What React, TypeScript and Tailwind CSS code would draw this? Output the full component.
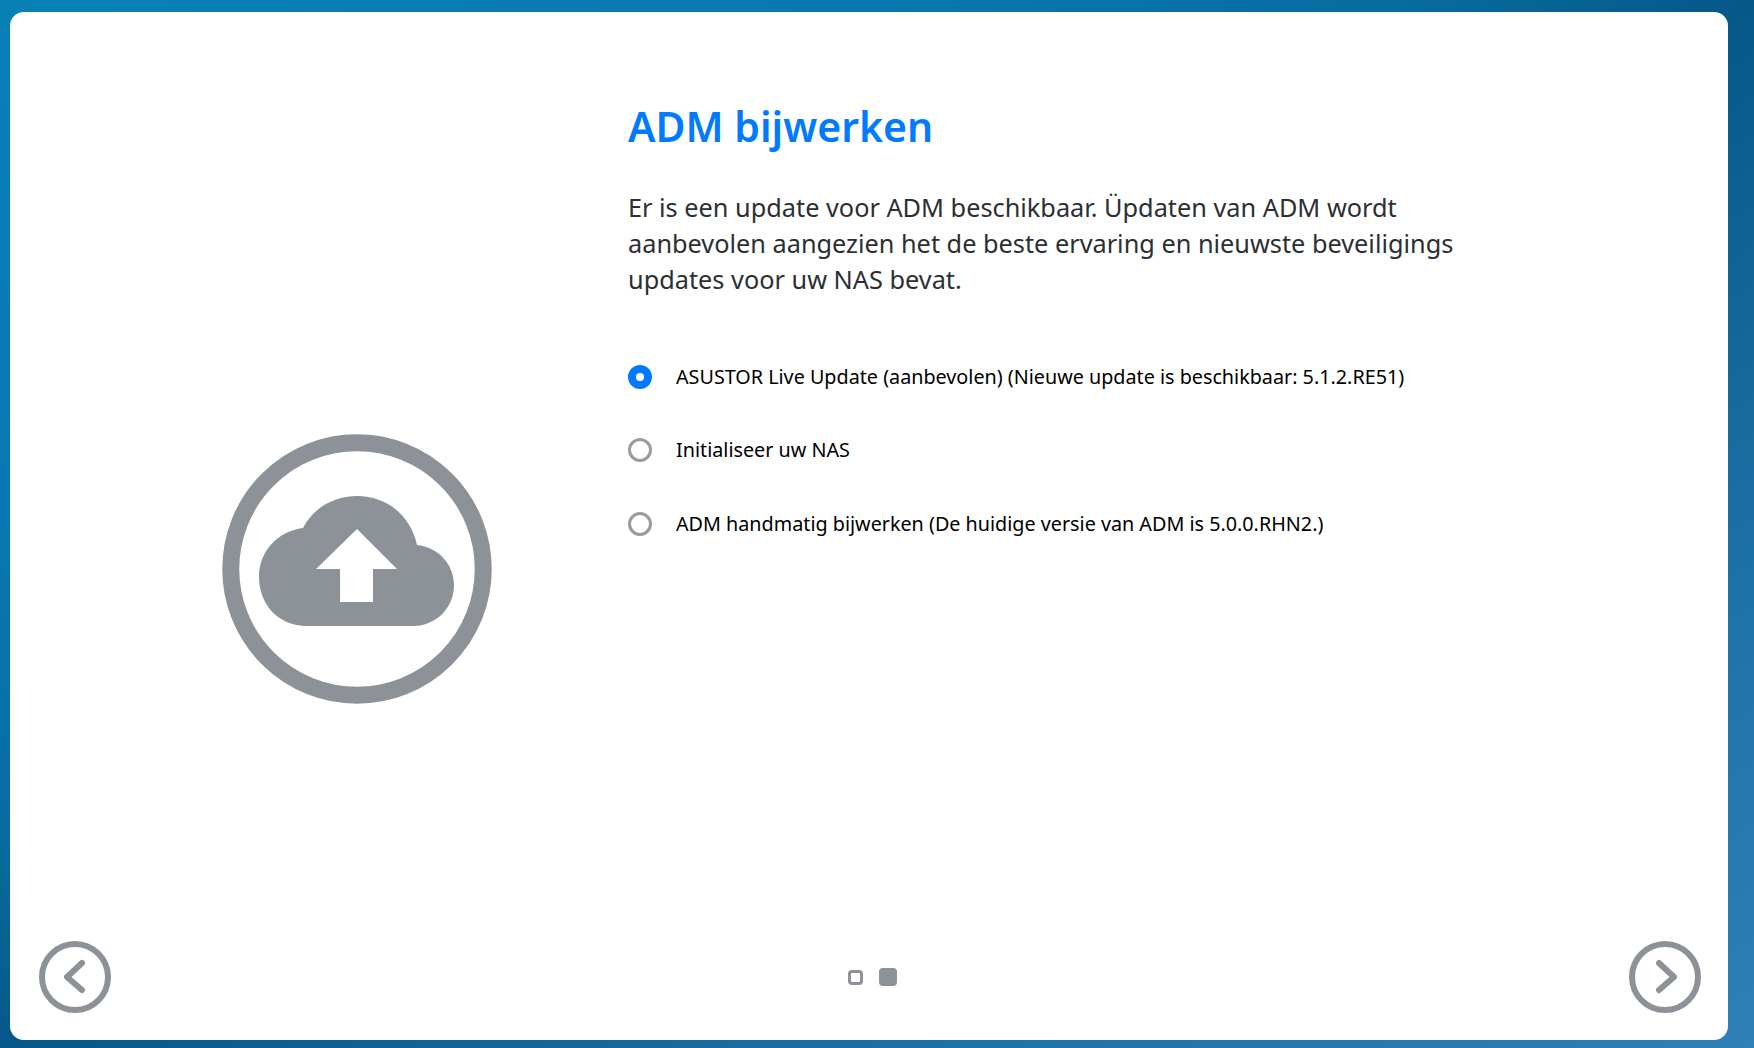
const GRAY = "#8c9297";

function UpdateIcon() {
  return (
    <svg width="270" height="270" viewBox="0 0 270 270">
      <circle cx="135" cy="135" r="126.25" fill="none" stroke={GRAY} strokeWidth="17" />
      <path
        d="M85 192C56 192 37 170 37 143C37 117 56 97 81 94C91 74 112 62 135 62C165 62 189 82 195 111C216 113 232 130 232 151C232 174 214 192 191 192Z"
        fill={GRAY}
      />
      <path d="M135 95L175 135H151V168H118V135H94Z" fill="#fff" />
    </svg>
  );
}

function NavButton({ direction }: { direction: "left" | "right" }) {
  return (
    <button className="block h-[72px] w-[72px]">
      <svg width="72" height="72" viewBox="0 0 72 72" fill="none" stroke={GRAY}>
        <circle cx="36" cy="36" r="33" strokeWidth="6" />
        <path
          d={direction === "left" ? "M43 22L28 36L43 49" : "M30 22L45 36L30 49"}
          strokeWidth="6"
          strokeLinecap="round"
          strokeLinejoin="round"
        />
      </svg>
    </button>
  );
}

function Option({ label, checked }: { label: string; checked?: boolean }) {
  return (
    <label className="flex h-[24px] items-center gap-[24px] text-[19.75px] text-black">
      {checked ? (
        <span className="flex h-[24px] w-[24px] items-center justify-center rounded-full bg-[#007bff]">
          <span className="h-[8px] w-[8px] rounded-full bg-white" />
        </span>
      ) : (
        <span className="h-[24px] w-[24px] rounded-full border-[3px] border-[#999b9d] bg-white" />
      )}
      <span>{label}</span>
    </label>
  );
}

export default function App() {
  return (
    <div
      className="h-[1048px] w-[1754px] overflow-hidden bg-[linear-gradient(to_bottom_right,#0880b6_0%,#0a78b0_25%,#086ca0_40%,#065888_50%,#14659a_65%,#1f72a8_78%,#2f7fb8_100%)] pb-[8px] pl-[10px] pr-[26px] pt-[12px]"
      style={{ fontFamily: '"Noto Sans", "Open Sans", sans-serif' }}
    >
      <div className="flex h-full flex-col rounded-[14px] bg-white">
        <div className="flex flex-1">
          <div className="flex w-[618px] shrink-0 justify-start pl-[211.5px] pt-[422px]">
            <UpdateIcon />
          </div>
          <div className="pt-[86px]">
            <h1 className="text-[41px] font-semibold leading-[56px] text-[#007bff]">ADM bijwerken</h1>
            <p className="mt-[35px] w-[870px] text-[25.3px] leading-[36px] text-[#2b2f33]">
              Er is een update voor ADM beschikbaar. Üpdaten van ADM wordt
              <br />
              aanbevolen aangezien het de beste ervaring en nieuwste beveiligings
              <br />
              updates voor uw NAS bevat.
            </p>
            <div className="mt-[67.5px] flex flex-col gap-[49.5px]">
              <Option checked label="ASUSTOR Live Update (aanbevolen) (Nieuwe update is beschikbaar: 5.1.2.RE51)" />
              <Option label="Initialiseer uw NAS" />
              <Option label="ADM handmatig bijwerken (De huidige versie van ADM is 5.0.0.RHN2.)" />
            </div>
          </div>
        </div>
        <div className="flex items-center justify-between pb-[27px] pl-[29px] pr-[27px]">
          <NavButton direction="left" />
          <div className="ml-[4px] flex items-center gap-[16px]">
            <span className="h-[15px] w-[15px] rounded-[4px] border-[3px] border-[#8c9297]" />
            <span className="h-[18px] w-[18px] rounded-[4px] bg-[#8c9297]" />
          </div>
          <NavButton direction="right" />
        </div>
      </div>
    </div>
  );
}
